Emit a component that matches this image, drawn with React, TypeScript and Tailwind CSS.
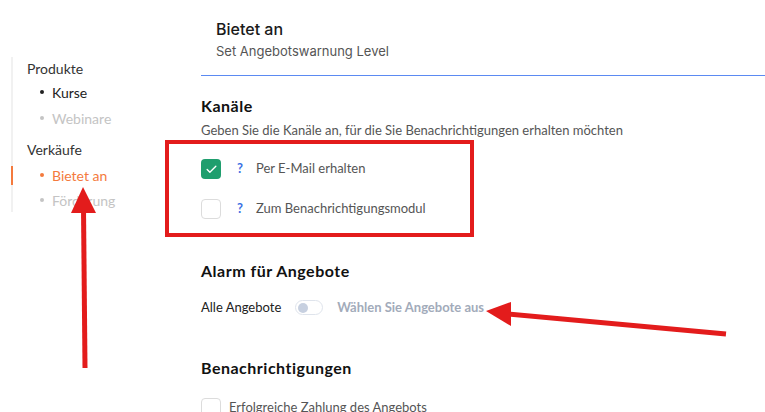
import { Check } from 'lucide-react';

const lato = { fontFamily: 'Lato, "Open Sans", sans-serif' };

function Checkbox({ checked }: { checked?: boolean }) {
  return checked ? (
    <div className="w-[20px] h-[20px] rounded-[4px] bg-[#1f9e6e] flex items-center justify-center shrink-0">
      <Check size={13} strokeWidth={2.5} className="text-white" />
    </div>
  ) : (
    <div className="w-[20px] h-[20px] rounded-[4px] border border-[#dcdcdc] bg-white shrink-0" />
  );
}

function SideItem({ label, color, active }: { label: string; color: string; active?: boolean }) {
  return (
    <div className={`relative h-[26px] flex items-center pl-[27px] ${color}`}>
      {active && <div className="absolute -left-[2px] top-[4px] w-[2px] h-[19px] bg-[#f47a3d]" />}
      <span className="w-[4px] h-[4px] rounded-full bg-current mr-[8px]" />
      <span>{label}</span>
    </div>
  );
}

export default function App() {
  return (
    <div className="relative w-[765px] h-[412px] overflow-hidden bg-white flex" style={lato}>
      {/* sidebar */}
      <div className="w-[201px] shrink-0 pt-[57px] pl-[11px] text-[14px]">
        <div className="border-l-2 border-[#f1f1f1]">
          <div className="h-[22px] flex items-center pl-[14px] text-[#333]">Produkte</div>
          <div className="h-[26px] flex items-center pl-[27px] text-[#222]">
            <span className="w-[4px] h-[4px] rounded-full bg-current mr-[8px]" />
            <span>Kurse</span>
          </div>
          <SideItem label="Webinare" color="text-[#c4c4c4]" />
          <div className="mt-[5px] h-[26px] flex items-center pl-[14px] text-[#333]">Verkäufe</div>
          <SideItem label="Bietet an" color="text-[#f47a3d]" active />
          <div className="h-[24px] flex items-center pl-[27px] text-[#c4c4c4]">
            <span className="w-[4px] h-[4px] rounded-full bg-current mr-[8px]" />
            <span>Förderung</span>
          </div>
        </div>
      </div>

      {/* main */}
      <div className="flex-1 flex flex-col">
        <div className="pl-[15px] pt-[19px] pb-[15px] border-b border-[#5b8af2]" style={{ fontFamily: 'Inter, sans-serif' }}>
          <div className="text-[16px] leading-[20px] font-medium text-[#1a1a1a]">Bietet an</div>
          <div className="mt-[3px] text-[13px] leading-[18px] text-[#555]">Set Angebotswarnung Level</div>
        </div>

        <div className="mt-[19px] text-[16px] leading-[22px] font-bold tracking-[0.5px] text-[#111]">Kanäle</div>
        <div className="mt-[4px] text-[13px] leading-[18px] text-[#555]">
          Geben Sie die Kanäle an, für die Sie Benachrichtigungen erhalten möchten
        </div>

        <div className="mt-[20px] h-[20px] flex items-center text-[13px] text-[#555]">
          <Checkbox checked />
          <span className="ml-[16px] w-[19px] text-[#3b6fe3] font-bold">?</span>
          <span>Per E-Mail erhalten</span>
        </div>
        <div className="mt-[20px] h-[20px] flex items-center text-[13px] text-[#555]">
          <Checkbox />
          <span className="ml-[16px] w-[19px] text-[#3b6fe3] font-bold">?</span>
          <span>Zum Benachrichtigungsmodul</span>
        </div>

        <div className="mt-[41px] text-[16px] leading-[22px] font-bold tracking-[0.5px] text-[#111]">Alarm für Angebote</div>
        <div className="mt-[16px] h-[20px] flex items-center text-[13px]">
          <span className="text-[#222]">Alle Angebote</span>
          <div className="ml-[14px] w-[28px] h-[15px] rounded-full border border-[#dfe4ec] flex items-center px-[2px]">
            <div className="w-[10px] h-[10px] rounded-full bg-[#c7d0e0]" />
          </div>
          <span className="ml-[14px] font-bold text-[#a2abba]">Wählen Sie Angebote aus</span>
        </div>

        <div className="mt-[39px] text-[16px] leading-[22px] font-bold tracking-[0.5px] text-[#111]">Benachrichtigungen</div>
        <div className="mt-[19px] h-[20px] flex items-center text-[13px] text-[#555]">
          <Checkbox />
          <span className="ml-[8px]">Erfolgreiche Zahlung des Angebots</span>
        </div>
      </div>

      {/* annotations */}
      <div className="absolute left-[165px] top-[140px] w-[309px] h-[97px] border-[4px] border-[#e31c1c]" />
      <svg className="absolute inset-0 pointer-events-none" width="765" height="412">
        <line x1="85" y1="368" x2="83.5" y2="208" stroke="#e31c1c" strokeWidth="5" />
        <polygon points="83,187 71,213 96,213" fill="#e31c1c" />
        <line x1="726" y1="334" x2="507" y2="314" stroke="#e31c1c" strokeWidth="5" />
        <polygon points="486,311 511,302 511,326" fill="#e31c1c" />
      </svg>
    </div>
  );
}
